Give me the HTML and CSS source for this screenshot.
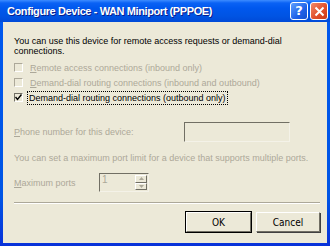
FILE: index.html
```html
<!DOCTYPE html>
<html lang="en">
<head>
    <meta charset="UTF-8">
    <title>Configure Device - WAN Miniport (PPPOE)</title>
    <link rel="stylesheet" href="styles.css">
</head>
<body>
    <div class="window">
        <!-- Title bar -->
        <div class="titlebar">
            <span class="title">Configure Device - WAN Miniport (PPPOE)</span>
            <div class="caption-btns">
                <span class="cap-btn help">?</span>
                <span class="cap-btn close">
                    <svg width="11" height="11" viewBox="0 0 11 11"><path d="M1.5 1.5 L9.5 9.5 M9.5 1.5 L1.5 9.5" stroke="#fff" stroke-width="2"/></svg>
                </span>
            </div>
        </div>

        <!-- Dialog body -->
        <div class="client">
            <p class="intro">You can use this device for remote access requests or demand-dial<br>connections.</p>

            <div class="checks">
                <div class="check disabled"><span class="box"></span><span class="label"><u>R</u>emote access connections (inbound only)</span></div>
                <div class="check disabled"><span class="box"></span><span class="label"><u>D</u>emand-dial routing connections (inbound and outbound)</span></div>
                <div class="check">
                    <span class="box">
                        <svg width="7" height="7" viewBox="0 0 7 7"><path d="M0.5 3 L2.5 5.5 L6.5 0.5" stroke="#000" stroke-width="1.4" fill="none"/></svg>
                    </span>
                    <span class="label focus">Demand-dial routing connections (outbound only)</span>
                </div>
            </div>

            <div class="field-row phone">
                <span class="field-label disabled"><u>P</u>hone number for this device:</span>
                <span class="textbox"></span>
            </div>

            <p class="note disabled">You can set a maximum port limit for a device that supports multiple ports.</p>

            <div class="field-row ports">
                <span class="field-label disabled"><u>M</u>aximum ports</span>
                <span class="spin">
                    <span class="spin-value">1</span>
                    <span class="spin-btns">
                        <span class="spin-btn"><svg width="5" height="3" viewBox="0 0 5 3"><path d="M2.5 0 L5 3 L0 3 Z" fill="#aca899"/></svg></span>
                        <span class="spin-btn"><svg width="5" height="3" viewBox="0 0 5 3"><path d="M0 0 L5 0 L2.5 3 Z" fill="#aca899"/></svg></span>
                    </span>
                </span>
            </div>

            <div class="separator"></div>

            <div class="buttons">
                <button class="btn default">OK</button>
                <button class="btn">Cancel</button>
            </div>
        </div>
    </div>
</body>
</html>
```

FILE: styles.css
```css
/* General Styling */
* {
    margin: 0;
    padding: 0;
    box-sizing: border-box;
}

body {
    width: 330px;
    height: 246px;
    overflow: hidden;
    font-family: "Liberation Sans", Arial, sans-serif;
    font-size: 9px;
    line-height: 10px;
    color: #000;
}

/* Window frame */
.window {
    display: flex;
    flex-direction: column;
    width: 330px;
    height: 246px;
    background: linear-gradient(to bottom, #0058ee 0, #0055e5 80%, #0831d9 100%);
}

/* Title bar */
.titlebar {
    height: 22px;
    display: flex;
    align-items: center;
    justify-content: space-between;
    padding: 0 2px 0 7px;
    background: linear-gradient(to bottom, #3d8cff 0, #0a62f5 3px, #0058ee 8px, #0054e3 16px, #004ad8 22px);
}

.title {
    color: #fff;
    font-family: "Liberation Sans", Arial, sans-serif;
    font-weight: bold;
    font-size: 11px;
    letter-spacing: -0.4px;
    text-shadow: 1px 1px 0 #0a1e8c;
}

.caption-btns {
    display: flex;
    gap: 2px;
}

.cap-btn {
    width: 18px;
    height: 18px;
    border: 1px solid #fff;
    border-radius: 3px;
    display: flex;
    align-items: center;
    justify-content: center;
    color: #fff;
    font-family: "DejaVu Sans", sans-serif;
    font-weight: bold;
    font-size: 13px;
}

.help {
    background: linear-gradient(135deg, #5ea0ff, #1f62e8 60%, #1450d0);
}

.close {
    background: linear-gradient(135deg, #f08a6a, #e2502c 55%, #c93a18);
}

/* Client area */
.client {
    flex: 1;
    margin: 0 3px 3px 3px;
    background: #ece9d8;
    padding: 14px 7px 11px 11px;
    display: flex;
    flex-direction: column;
}

.disabled {
    color: #aca899;
}

.intro {
    height: 20px;
}

/* Checkboxes */
.checks {
    margin-top: 4px;
}

.check {
    height: 15px;
    display: flex;
    align-items: center;
}

.box {
    width: 9px;
    height: 9px;
    margin-right: 6px;
    border-top: 1px solid #aca899;
    border-left: 1px solid #aca899;
    border-right: 1px solid #fff;
    border-bottom: 1px solid #fff;
    display: flex;
    align-items: center;
    justify-content: center;
}

.check:not(.disabled) .box {
    border-top-color: #716f64;
    border-left-color: #716f64;
}

.label {
    padding: 1px 1px;
}

.focus {
    outline: 1px dotted #000;
    margin-left: -1px;
}

/* Fields */
.field-row {
    display: flex;
    align-items: center;
}

.phone {
    margin-top: 17px;
    justify-content: space-between;
    padding-right: 30px;
}

.textbox {
    width: 106px;
    height: 20px;
    border-top: 1px solid #716f64;
    border-left: 1px solid #716f64;
    border-right: 1px solid #f4f2e8;
    border-bottom: 1px solid #f4f2e8;
}

.note {
    margin-top: 11px;
    white-space: nowrap;
}

.ports {
    margin-top: 10px;
}

.ports .field-label {
    width: 85px;
}

.spin {
    width: 50px;
    height: 19px;
    display: flex;
    justify-content: space-between;
    border-top: 1px solid #716f64;
    border-left: 1px solid #716f64;
    border-right: 1px solid #f4f2e8;
    border-bottom: 1px solid #f4f2e8;
    padding: 1px 1px 1px 2px;
}

.spin-value {
    color: #aca899;
    font-size: 10px;
}

.spin-btns {
    display: flex;
    flex-direction: column;
    width: 12px;
}

.spin-btn {
    flex: 1;
    display: flex;
    align-items: center;
    justify-content: center;
    border-top: 1px solid #fff;
    border-left: 1px solid #fff;
    border-right: 1px solid #716f64;
    border-bottom: 1px solid #716f64;
}

/* Separator */
.separator {
    margin-top: 10px;
    height: 2px;
    border-top: 1px solid #aca899;
    border-bottom: 1px solid #fff;
}

/* Buttons */
.buttons {
    margin-top: 8px;
    display: flex;
    justify-content: flex-end;
    gap: 5px;
}

.btn {
    width: 64px;
    height: 20px;
    background: #ece9d8;
    font-family: "DejaVu Sans Condensed", "DejaVu Sans", sans-serif;
    font-size: 10px;
    color: #000;
    border-top: 1px solid #fff;
    border-left: 1px solid #fff;
    border-right: 1px solid #716f64;
    border-bottom: 1px solid #716f64;
    box-shadow: 1px 1px 0 #404040;
}

.btn.default {
    width: 65px;
    outline: 1px solid #000;
}
```
